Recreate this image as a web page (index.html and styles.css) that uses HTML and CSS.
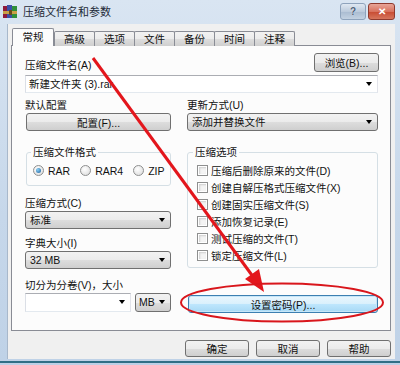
FILE: index.html
```html
<!DOCTYPE html>
<html lang="zh-CN">
<head>
    <meta charset="UTF-8">
    <title>压缩文件名和参数</title>
    <link rel="stylesheet" href="styles.css">
</head>
<body>
    <div class="window">
        <div class="titlebar">
            <svg class="app-icon" width="14" height="14" viewBox="0 0 14 14">
                <rect x="0" y="1" width="4" height="12" fill="#8e1a3c"/>
                <rect x="4" y="0" width="5" height="13" fill="#3a4fa8"/>
                <rect x="9" y="1" width="5" height="12" fill="#2f8f3a"/>
                <rect x="0" y="6" width="14" height="3" fill="#c9a046"/>
                <rect x="6" y="5" width="3" height="5" fill="#6b4b1a"/>
            </svg>
            <span class="title">压缩文件名和参数</span>
            <div class="caption-btns">
                <span class="cap-btn help">?</span>
                <span class="cap-btn close">✕</span>
            </div>
        </div>

        <div class="client">
            <div class="tabs">
                <span class="tab active">常规</span>
                <span class="tab">高级</span>
                <span class="tab">选项</span>
                <span class="tab">文件</span>
                <span class="tab">备份</span>
                <span class="tab">时间</span>
                <span class="tab">注释</span>
            </div>

            <div class="panel">
                <div class="name-row">
                    <span class="label">压缩文件名(A)</span>
                    <span class="btn browse">浏览(B)...</span>
                </div>
                <div class="combo edit name-combo">新建文件夹 (3).rar</div>

                <div class="columns">
                    <div class="col left">
                        <span class="label">默认配置</span>
                        <span class="btn config">配置(F)...</span>

                        <fieldset class="group format">
                            <legend>压缩文件格式</legend>
                            <div class="radios">
                                <span class="radio-item"><span class="radio checked"></span>RAR</span>
                                <span class="radio-item"><span class="radio"></span>RAR4</span>
                                <span class="radio-item"><span class="radio"></span>ZIP</span>
                            </div>
                        </fieldset>

                        <span class="label method-label">压缩方式(C)</span>
                        <div class="combo">标准</div>
                        <span class="label dict-label">字典大小(I)</span>
                        <div class="combo">32 MB</div>
                        <span class="label split-label">切分为分卷(V)，大小</span>
                        <div class="split-row">
                            <div class="combo edit split-combo"></div>
                            <div class="combo unit-combo">MB</div>
                        </div>
                    </div>

                    <div class="col right">
                        <span class="label">更新方式(U)</span>
                        <div class="combo update-combo">添加并替换文件</div>

                        <fieldset class="group options">
                            <legend>压缩选项</legend>
                            <div class="check-row"><span class="check"></span>压缩后删除原来的文件(D)</div>
                            <div class="check-row"><span class="check"></span>创建自解压格式压缩文件(X)</div>
                            <div class="check-row"><span class="check"></span>创建固实压缩文件(S)</div>
                            <div class="check-row"><span class="check"></span>添加恢复记录(E)</div>
                            <div class="check-row"><span class="check"></span>测试压缩的文件(T)</div>
                            <div class="check-row"><span class="check"></span>锁定压缩文件(L)</div>
                        </fieldset>

                        <span class="btn focused password">设置密码(P)...</span>
                    </div>
                </div>
            </div>

            <div class="footer">
                <span class="btn">确定</span>
                <span class="btn">取消</span>
                <span class="btn">帮助</span>
            </div>
        </div>

        <!-- red annotation drawn over the dialog -->
        <svg class="annotation" width="400" height="365" viewBox="0 0 400 365">
            <line x1="93" y1="58" x2="254" y2="278" stroke="#e3161c" stroke-width="3"/>
            <polygon points="264,292 245,279 259,269" fill="#e3161c"/>
            <ellipse cx="282" cy="302.5" rx="101" ry="19" fill="none" stroke="#d9161c" stroke-width="2"/>
        </svg>
    </div>
</body>
</html>
```

FILE: styles.css
```css
* {
    box-sizing: border-box;
}
body {
    margin: 0;
    width: 400px;
    height: 365px;
    overflow: hidden;
    font-family: "Liberation Sans", "Noto Sans CJK SC", sans-serif;
    font-size: 10.5px;
    color: #111;
    background-color: #bcd0e6;
}
.window {
    position: relative;
    width: 400px;
    height: 363px;
    display: flex;
    flex-direction: column;
    background: linear-gradient(#d9e5f2, #c6d7ea 60%, #bfd2e7);
    border-bottom: 2px solid #2f6f86;
}
.titlebar {
    height: 24px;
    display: flex;
    align-items: center;
    padding-left: 3px;
}
.app-icon {
    margin-top: -1px;
}
.title {
    margin-left: 6px;
    font-size: 11px;
    line-height: 14px;
    color: #1e2a38;
}
.caption-btns {
    margin-left: auto;
    margin-right: 5px;
    margin-top: -2px;
    display: flex;
    gap: 2px;
}
.cap-btn {
    width: 26px;
    height: 17px;
    border-radius: 3px;
    display: flex;
    align-items: center;
    justify-content: center;
    font-size: 10px;
    font-weight: bold;
    color: #fff;
}
.cap-btn.help {
    border: 1px solid #8ea3bc;
    background: linear-gradient(#dfe8f2, #bccbdc 50%, #a9bbd0 51%, #c3d2e2);
    color: #4d5f78;
    text-shadow: 0 0 1px #fff;
}
.cap-btn.close {
    width: 27px;
    border: 1px solid #8e3a2e;
    background: linear-gradient(#e8a597, #d8735f 50%, #c74a31 51%, #d6765d);
}
.client {
    flex: 1;
    margin: 0 5px 2px 7px;
    padding: 4px 4px 0 3px;
    background-color: #f0f0f0;
    border-left: 1px solid #a8b8cb;
}
.tabs {
    display: flex;
    align-items: flex-end;
    height: 18px;
    padding-left: 1px;
    margin-bottom: -1px;
    position: relative;
}
.tab {
    width: 41px;
    height: 15px;
    margin-right: -1px;
    border: 1px solid #898c95;
    border-bottom: none;
    border-radius: 2px 2px 0 0;
    background: linear-gradient(#f2f2f2, #ebebeb 50%, #dddddd 51%, #cfcfcf);
    text-align: center;
    line-height: 14px;
}
.tab.active {
    width: 42px;
    height: 18px;
    margin-right: 0;
    background: #fcfcfc;
    position: relative;
    z-index: 1;
    line-height: 16px;
}
.panel {
    height: 286px;
    border: 1px solid #898c95;
    background-color: #fcfcfc;
    padding: 7px 12px 0 13px;
}
.label {
    display: block;
    line-height: 14px;
    white-space: nowrap;
}
.name-row {
    display: flex;
    justify-content: space-between;
    align-items: flex-end;
    height: 19px;
}
.btn {
    display: flex;
    align-items: center;
    justify-content: center;
    height: 18px;
    border: 1px solid #707070;
    border-radius: 3px;
    background: linear-gradient(#f2f2f2, #ebebeb 50%, #dddddd 51%, #cfcfcf);
    white-space: nowrap;
}
.btn.browse {
    width: 65px;
    height: 19px;
    margin-right: -1px;
}
.btn.focused {
    border-color: #3c7fb1;
    background: linear-gradient(#eaf6fd, #d9f0fc 50%, #bee6fd 51%, #a7d9f5);
    box-shadow: inset 0 0 0 1px #c6e6f8;
}
.combo {
    position: relative;
    height: 18px;
    line-height: 16px;
    padding-left: 4px;
    border: 1px solid #707070;
    border-radius: 3px;
    background: linear-gradient(#f2f2f2, #ebebeb 50%, #dddddd 51%, #cfcfcf);
    white-space: nowrap;
}
.combo::after {
    content: "";
    position: absolute;
    right: 5px;
    top: 6px;
    border-left: 3.5px solid transparent;
    border-right: 3.5px solid transparent;
    border-top: 4px solid #000;
}
.combo.edit {
    border-radius: 0;
    border-color: #abadb3 #e2e3ea #e3e9ef #dbdfe6;
    background: #fff;
}
.name-combo {
    margin-top: 3px;
    padding-left: 3px;
}
.columns {
    display: flex;
    gap: 16px;
    margin-top: 5px;
}
.col.left {
    width: 146px;
}
.col.right {
    flex: 1;
}
.btn.config {
    margin-top: 1px;
    margin-left: 1px;
}
.update-combo {
    margin-top: 1px;
}
.group {
    margin: 14px 0 0;
    border: 1px solid #d5dfe5;
    border-radius: 3px;
    min-width: 0;
}
.group legend {
    padding: 0 2px;
    line-height: 14px;
}
.group.format {
    margin-left: 1px;
    padding: 5px 4px 8px 4px;
}
.radios {
    display: flex;
    gap: 10px;
    height: 13px;
    align-items: center;
    margin-left: 2px;
}
.radio-item {
    display: flex;
    align-items: center;
    gap: 4px;
}
.radio {
    width: 11px;
    height: 11px;
    border-radius: 50%;
    border: 1px solid #8e8f8f;
    background: radial-gradient(circle at 40% 35%, #ffffff, #d8d8d8);
    position: relative;
}
.radio.checked::after {
    content: "";
    position: absolute;
    left: 2px;
    top: 2px;
    width: 5px;
    height: 5px;
    border-radius: 50%;
    background: radial-gradient(circle at 35% 35%, #8ad0f5, #1c5e9c);
}
.group.options {
    padding: 3px 6px 3px 5px;
}
.check-row {
    display: flex;
    align-items: center;
    height: 17px;
    gap: 3px;
    margin-left: 4px;
    white-space: nowrap;
}
.check {
    width: 11px;
    height: 11px;
    border: 1px solid #8e8f8f;
    background: #f4f4f4;
    box-shadow: inset 0 0 0 1px #fff, inset 1px 1px 2px 1px #cfcfcf;
    flex-shrink: 0;
}
.method-label {
    margin-top: 10px;
}
.dict-label {
    margin-top: 7px;
}
.split-label {
    margin-top: 9px;
}
.method-label + .combo,
.dict-label + .combo {
    margin-top: 1px;
}
.split-row {
    display: flex;
    gap: 4px;
    margin-top: 1px;
}
.split-combo {
    width: 106px;
    height: 19px;
}
.unit-combo {
    flex: 1;
    height: 19px;
    padding-left: 3px;
}
.btn.password {
    margin-top: 27px;
    margin-left: 1px;
}
.footer {
    display: flex;
    justify-content: flex-end;
    gap: 7px;
    margin-top: 9px;
}
.footer .btn {
    width: 64px;
    height: 17px;
}
.annotation {
    position: absolute;
    left: 0;
    top: 0;
    pointer-events: none;
}
```
